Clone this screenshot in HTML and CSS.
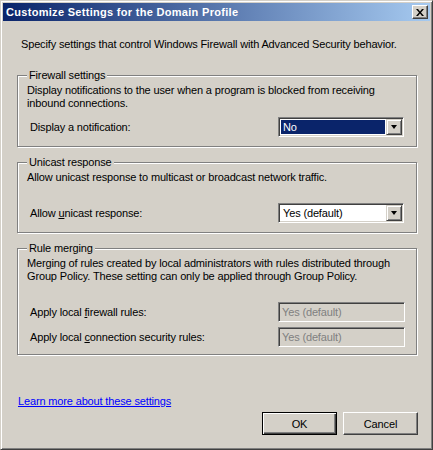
FILE: index.html
```html
<!DOCTYPE html>
<html>
<head>
<meta charset="utf-8">
<link rel="stylesheet" href="styles.css">
</head>
<body>
<div class="window">
  <div class="titlebar">
    <span class="title">Customize Settings for the Domain Profile</span>
    <span class="close"><svg width="8" height="7" viewBox="0 0 8 7"><path d="M0 0h2l2 2.5L6 0h2L5 3.5 8 7H6L4 4.5 2 7H0l3-3.5z" fill="#000"/></svg></span>
  </div>
  <div class="content">
    <p class="intro">Specify settings that control Windows Firewall with Advanced Security behavior.</p>

    <fieldset class="group g1">
      <legend>Firewall settings</legend>
      <p class="desc">Display notifications to the user when a program is blocked from receiving inbound connections.</p>
      <div class="row r1">
        <span class="label">Display a notification:</span>
        <div class="combo">
          <span class="value selected">No</span>
          <span class="arrow"><i class="tri"></i></span>
        </div>
      </div>
    </fieldset>

    <fieldset class="group g2">
      <legend>Unicast response</legend>
      <p class="desc">Allow unicast response to multicast or broadcast network traffic.</p>
      <div class="row r2">
        <span class="label">Allow <u>u</u>nicast response:</span>
        <div class="combo">
          <span class="value">Yes (default)</span>
          <span class="arrow"><i class="tri"></i></span>
        </div>
      </div>
    </fieldset>

    <fieldset class="group g3">
      <legend>Rule merging</legend>
      <p class="desc">Merging of rules created by local administrators with rules distributed through Group Policy. These setting can only be applied through Group Policy.</p>
      <div class="row r3">
        <span class="label">Apply local <u>f</u>irewall rules:</span>
        <div class="textbox disabled">Yes (default)</div>
      </div>
      <div class="row r4">
        <span class="label">Apply local <u>c</u>onnection security rules:</span>
        <div class="textbox disabled">Yes (default)</div>
      </div>
    </fieldset>

    <div class="footer">
      <a class="link" href="#">Learn more about these settings</a>
      <div class="buttons">
        <button class="btn default">OK</button>
        <button class="btn">Cancel</button>
      </div>
    </div>
  </div>
</div>
</body>
</html>
```

FILE: styles.css
```css
html, body {
  margin: 0;
  padding: 0;
  background: #d4d0c8;
}
body {
  font-family: "Liberation Sans", Arial, sans-serif;
  font-size: 11px;
  line-height: 13px;
  letter-spacing: -0.15px;
  color: #000;
}
.window {
  width: 433px;
  height: 450px;
  box-sizing: border-box;
  border: 1px solid;
  border-color: #d4d0c8 #404040 #404040 #d4d0c8;
  box-shadow: inset 1px 1px 0 #fff, inset -1px -1px 0 #808080;
  padding: 2px;
  display: flex;
  flex-direction: column;
  background: #d4d0c8;
}
.titlebar {
  height: 18px;
  flex: none;
  display: flex;
  align-items: center;
  justify-content: space-between;
  padding: 0 2px 0 3px;
  background: linear-gradient(to right, #0a246a, #a6caf0);
}
.title {
  color: #fff;
  font-weight: bold;
  font-size: 11px;
  letter-spacing: 0.3px;
  white-space: nowrap;
}
.close {
  width: 16px;
  height: 14px;
  box-sizing: border-box;
  display: flex;
  align-items: center;
  justify-content: center;
  background: #d4d0c8;
  border: 1px solid;
  border-color: #fff #404040 #404040 #fff;
  box-shadow: inset -1px -1px 0 #808080;
}
.content {
  flex: 1;
  display: flex;
  flex-direction: column;
}
p {
  margin: 0;
}
.intro {
  margin: 17px 0 0 18px;
}
.group {
  margin: 18px 0 0 14px;
  width: 400px;
  box-sizing: border-box;
  border: 1px solid #808080;
  box-shadow: inset 1px 1px 0 #fff, 1px 1px 0 #fff;
  padding: 2px 0 9px 9px;
  min-width: 0;
}
.group.g2, .group.g3 {
  margin-top: 9px;
}
.group.g3 {
  padding-bottom: 7px;
}
.group legend {
  padding: 0 2px;
  background: #d4d0c8;
  line-height: 13px;
}
.desc {
  padding-right: 10px;
}
.row {
  display: flex;
  align-items: center;
  justify-content: space-between;
  height: 20px;
  padding-right: 12px;
}
.r1 { margin-top: 7px; }
.r2 { margin-top: 19px; }
.r3 { margin-top: 19px; }
.r4 { margin-top: 5px; }
.label {
  margin-left: 3px;
}
.label u {
  text-decoration: underline;
}
.combo {
  width: 126px;
  height: 20px;
  box-sizing: border-box;
  border: 1px solid;
  border-color: #808080 #fff #fff #808080;
  box-shadow: inset 1px 1px 0 #404040, inset -1px -1px 0 #d4d0c8;
  background: #fff;
  display: flex;
  align-items: stretch;
  padding: 2px 2px 2px 2px;
}
.value {
  flex: 1;
  padding-left: 2px;
  display: flex;
  align-items: center;
  margin-right: 1px;
}
.value.selected {
  background: #0a246a;
  color: #fff;
}
.arrow {
  width: 16px;
  margin: -1px -1px -1px 0;
  box-sizing: border-box;
  background: #d4d0c8;
  border: 1px solid;
  border-color: #d4d0c8 #404040 #404040 #d4d0c8;
  box-shadow: inset 1px 1px 0 #fff, inset -1px -1px 0 #808080;
  display: flex;
  align-items: center;
  justify-content: center;
}
.tri {
  display: block;
  width: 0;
  height: 0;
  border-left: 3.5px solid transparent;
  border-right: 3.5px solid transparent;
  border-top: 4px solid #000;
}
.textbox {
  width: 127px;
  height: 20px;
  box-sizing: border-box;
  border: 1px solid;
  border-color: #808080 #fff #fff #808080;
  box-shadow: inset 1px 1px 0 #404040, inset -1px -1px 0 #d4d0c8;
  padding: 0 0 0 3px;
  display: flex;
  align-items: center;
  margin-right: -1px;
}
.textbox.disabled {
  background: #d4d0c8;
  color: #808080;
}
.footer {
  margin-top: auto;
  display: flex;
  flex-direction: column;
  align-items: flex-start;
  padding: 0 12px 12px 15px;
}
.link {
  color: #0000ff;
  text-decoration: underline;
}
.buttons {
  align-self: flex-end;
  display: flex;
  gap: 6px;
  margin-top: 4px;
}
.btn {
  width: 75px;
  height: 23px;
  box-sizing: border-box;
  font-family: "Liberation Sans", Arial, sans-serif;
  font-size: 11px;
  letter-spacing: -0.15px;
  color: #000;
  background: #d4d0c8;
  border: 1px solid;
  border-color: #fff #404040 #404040 #fff;
  box-shadow: inset -1px -1px 0 #808080, inset 1px 1px 0 #d4d0c8;
  padding: 0;
}
.btn.default {
  border: 1px solid #000;
  box-shadow: inset 1px 1px 0 #fff, inset -1px -1px 0 #404040, inset -2px -2px 0 #808080;
}
```
